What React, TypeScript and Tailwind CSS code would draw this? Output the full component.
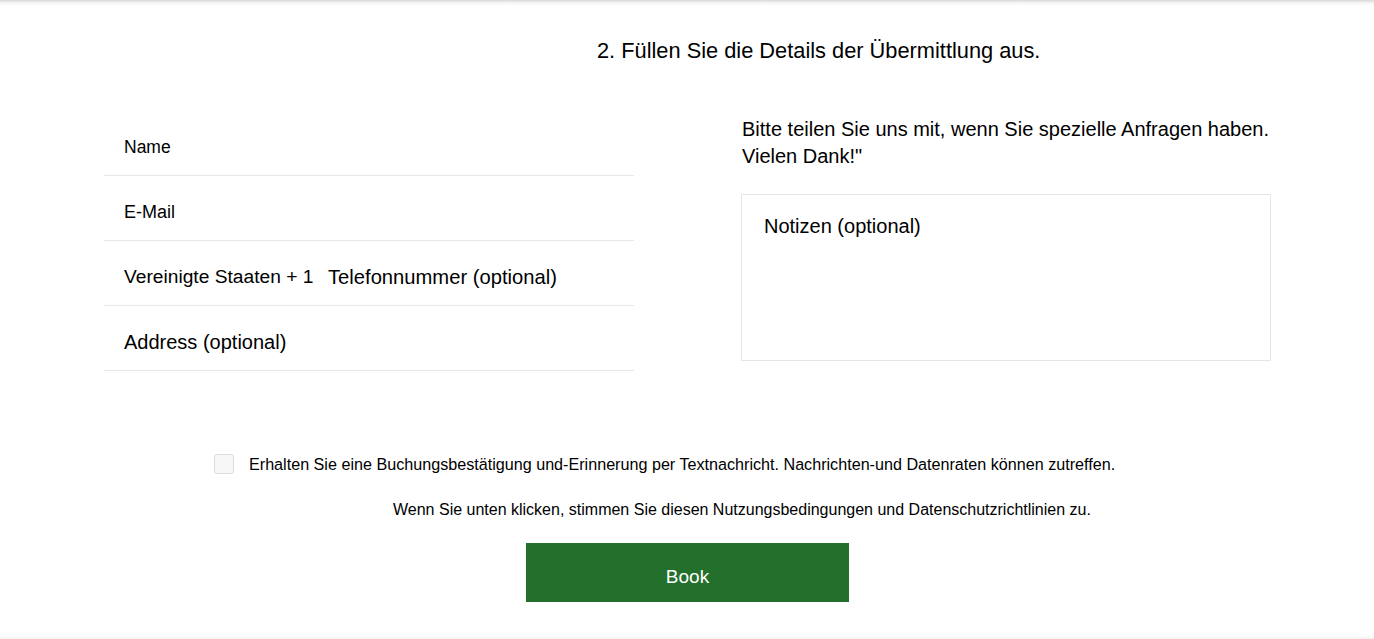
import React from "react";

export default function App() {
  const font = { fontFamily: '"Liberation Sans", Arial, sans-serif' };
  return (
    <div className="h-[639px] w-full bg-white text-black flex flex-col overflow-hidden" style={font}>
      <div className="h-[6px] w-full bg-linear-to-b from-[#d9d9d9] via-[#f6f6f6] to-white" />
      <div className="ml-[104px] w-[1167px] flex flex-col">
        <h2 className="mt-[32px] pl-[493px] text-[21.8px] leading-[26px] font-normal whitespace-nowrap">
          2. Füllen Sie die Details der Übermittlung aus.
        </h2>

        <div className="mt-[47px] grid grid-cols-[530px_530px] gap-x-[107px]">
          <div className="flex flex-col">
            <div className="h-[65px] border-b border-[#e8e8e8] flex items-center pt-[9px] pl-[20px]">
              <span className="text-[17.5px]">Name</span>
            </div>
            <div className="h-[65px] border-b border-[#e8e8e8] flex items-center pt-[8px] pl-[20px]">
              <span className="text-[18px]">E-Mail</span>
            </div>
            <div className="h-[65px] border-b border-[#e8e8e8] flex items-center pt-[9px] pl-[20px]">
              <span className="text-[19.2px] w-[204px] whitespace-nowrap">Vereinigte Staaten + 1</span>
              <span className="text-[20.2px] whitespace-nowrap">Telefonnummer (optional)</span>
            </div>
            <div className="h-[65px] border-b border-[#e8e8e8] flex items-center pt-[8px] pl-[20px]">
              <span className="text-[20px]">Address (optional)</span>
            </div>
          </div>

          <div className="flex flex-col">
            <p className="mt-[5px] pl-[1px] text-[20px] leading-[27px]">
              Bitte teilen Sie uns mit, wenn Sie spezielle Anfragen haben.
              <br />
              Vielen Dank!"
            </p>
            <div className="mt-[24px] h-[167px] border border-[#e6e6e6] pt-[16px] pl-[22px]">
              <span className="text-[20px]">Notizen (optional)</span>
            </div>
          </div>
        </div>

        <div className="mt-[81px] ml-[110px] flex items-center gap-[15px]">
          <div className="w-[20px] h-[20px] rounded-[3px] border border-[#dcdcdc] bg-[#f7f7f7] shrink-0" />
          <span className="text-[16.15px] whitespace-nowrap">
            Erhalten Sie eine Buchungsbestätigung und-Erinnerung per Textnachricht. Nachrichten-und Datenraten können zutreffen.
          </span>
        </div>

        <p className="mt-[25px] pl-[289px] text-[16px] leading-[18px] whitespace-nowrap">
          Wenn Sie unten klicken, stimmen Sie diesen Nutzungsbedingungen und Datenschutzrichtlinien zu.
        </p>

        <button className="mt-[24px] ml-[422px] w-[323px] h-[59px] bg-[#236f2c] text-white text-[19px] flex items-center justify-center pt-[9px]">
          Book
        </button>
      </div>
      <div className="mt-auto h-[5px] w-full bg-linear-to-b from-white to-[#f4f4f4]" />
    </div>
  );
}
